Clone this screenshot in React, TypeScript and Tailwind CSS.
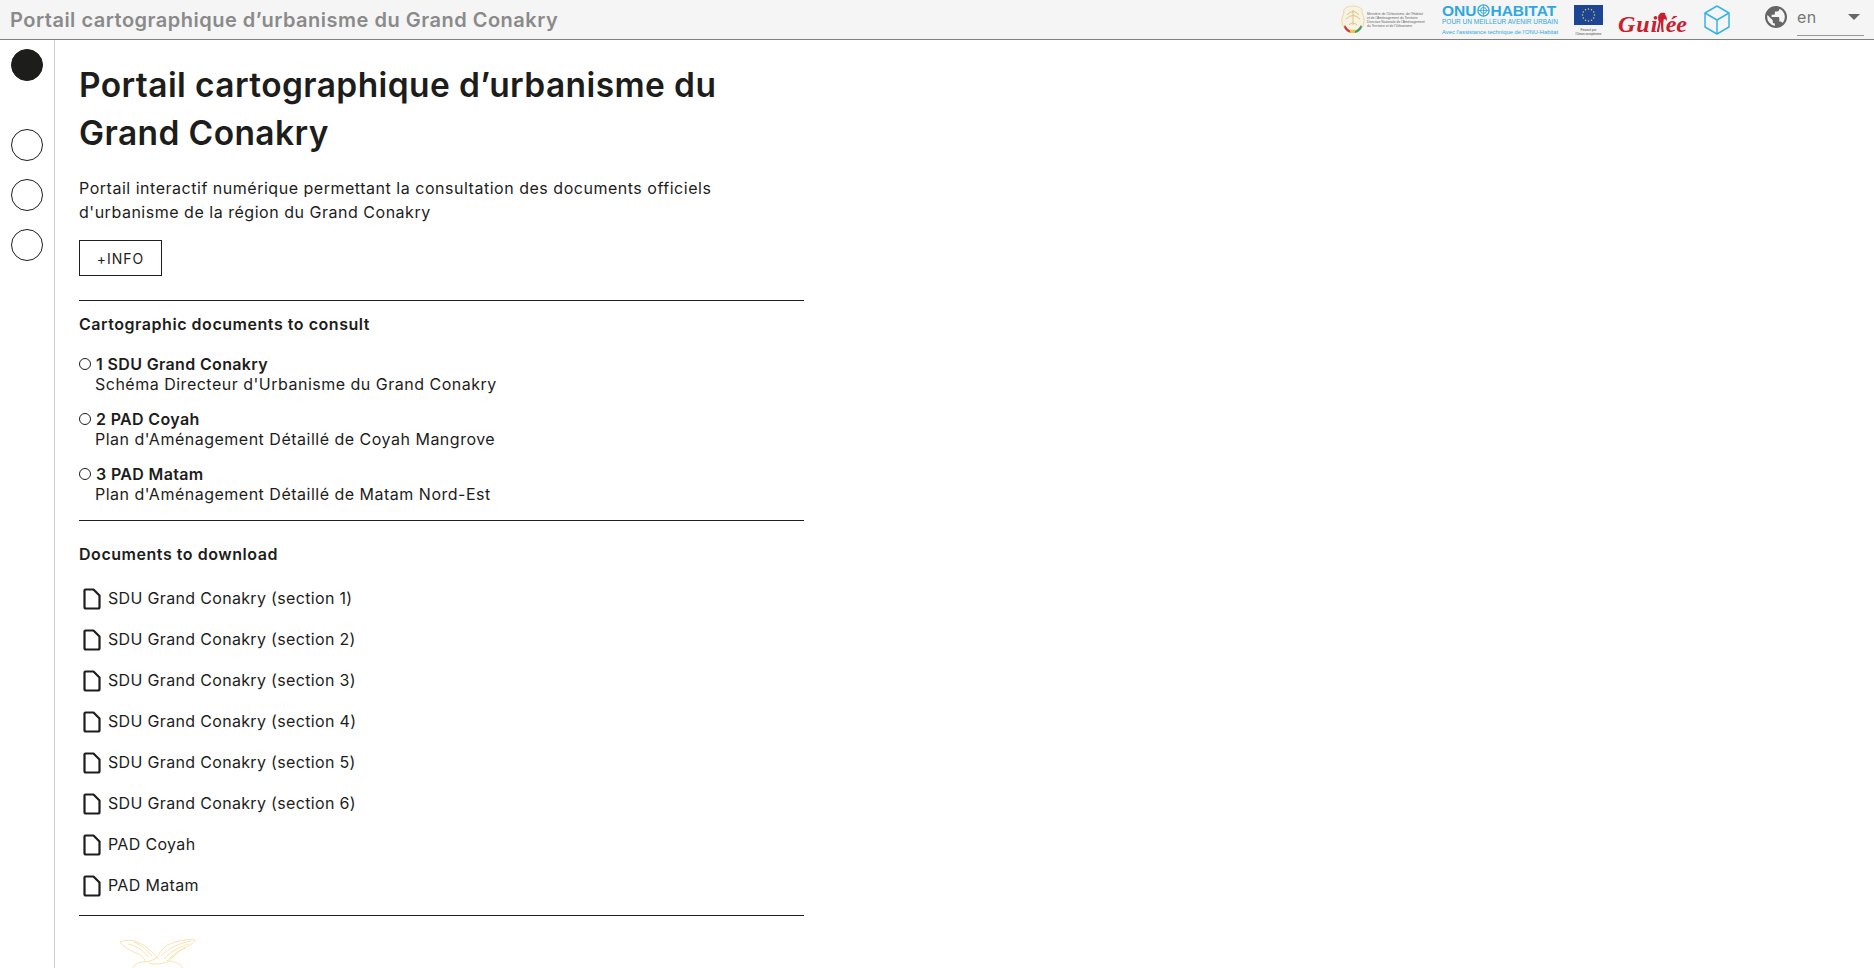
import React from "react";

const F = "font-['Inter','Liberation_Sans',sans-serif]";

function Arms() {
  return (
    <svg width="26" height="29" viewBox="0 0 26 29" fill="none">
      <path d="M4 8 C2 3 9 1 13 1 C17 1 24 3 22 8 C26 14 24 22 20 25 L6 25 C2 22 0 14 4 8Z" fill="#f8f2e2" stroke="#e8d7a6" strokeWidth="1" />
      <path d="M13 5 L13 20 M7 10 Q13 3 19 10 M6 14 Q13 7 20 14 M9 20 Q13 16 17 20" stroke="#dcc582" strokeWidth="1" />
      <path d="M5 20 Q8 25 11 26 L11 28 Q6 27 4 22Z" fill="#c9363c" />
      <rect x="10" y="25" width="6" height="3" fill="#e8c93c" />
      <path d="M21 20 Q18 25 15 26 L15 28 Q20 27 22 22Z" fill="#3f9a5c" />
    </svg>
  );
}

function EU() {
  const stars = Array.from({ length: 12 }, (_, i) => {
    const a = (i / 12) * Math.PI * 2;
    return <circle key={i} cx={14.5 + Math.cos(a) * 6} cy={10 + Math.sin(a) * 6} r="0.75" fill="#f0d040" />;
  });
  return (
    <svg width="29" height="20" viewBox="0 0 29 20" className="block">
      <rect width="29" height="20" fill="#1c4596" />
      {stars}
    </svg>
  );
}

function UnEmblem() {
  return (
    <svg width="13" height="13" viewBox="0 0 13 13" fill="none" stroke="#2fa8e0" className="block mx-[0.5px]">
      <circle cx="6.5" cy="6.5" r="5.6" strokeWidth="1.3" />
      <circle cx="6.5" cy="6.5" r="3" strokeWidth="1" />
      <path d="M6.5 1 V12 M1 6.5 H12" strokeWidth="0.8" />
    </svg>
  );
}

function Cube() {
  return (
    <svg width="26" height="30" viewBox="0 0 26 30" fill="none" stroke="#38b3e6" strokeWidth="1.5" strokeLinejoin="round" className="block">
      <path d="M13 1 L25 8 V22 L13 29 L1 22 V8 Z" />
      <path d="M1 8 L13 15 L25 8 M13 15 V29" />
    </svg>
  );
}

function Globe() {
  return (
    <svg width="22" height="22" viewBox="2 2 20 20" fill="#666" className="block">
      <path d="M12 2a10 10 0 1 0 0 20 10 10 0 0 0 0-20Zm-1 17.9A8 8 0 0 1 4.2 10.2L9 15v1a2 2 0 0 0 2 2v1.9Zm6.9-2.5A2 2 0 0 0 16 16h-1v-3a1 1 0 0 0-1-1H8v-2h2a1 1 0 0 0 1-1V7h2a2 2 0 0 0 2-2v-.4a8 8 0 0 1 2.9 12.8Z" />
    </svg>
  );
}

function GuineeFigure() {
  return (
    <svg width="17" height="30" viewBox="0 0 16 28" fill="#c8202f" className="block mx-[-2px] mb-[-2px]">
      <path d="M3 8 C3 3 7 0 10 1 C13 0 14 3 13 4 C15 6 16 8 15 13 C14 10 12 9 11 10 C10 15 10 22 11 28 L8 28 C7 22 7 17 7 13 C6 18 5 23 4 28 L1 28 C2 22 4 16 4 13 C3 12 3 10 3 8Z" />
    </svg>
  );
}

function DocIcon() {
  return (
    <svg width="18" height="22" viewBox="0 0 18 22" fill="none" stroke="#1d1d1b" strokeWidth="2.2" strokeLinejoin="round" className="block shrink-0">
      <path d="M2.5 1.5 H10.5 L16.5 7.5 V19 A1.5 1.5 0 0 1 15 20.5 H3 A1.5 1.5 0 0 1 1.5 19 V2.5 A1 1 0 0 1 2.5 1.5 Z" />
    </svg>
  );
}

function Eagle() {
  return (
    <svg width="78" height="32" viewBox="0 0 78 32" fill="none" stroke="#fbe3ae" strokeWidth="1" className="block">
      <path d="M1 4 C8 1 16 2 24 7 C30 11 35 15 38 20 C42 10 50 5 60 3 C66 2 72 1 76 2 C74 6 68 9 62 12 C58 15 54 19 50 23 C56 24 62 25 64 31 M38 20 C34 22 30 24 25 24 C20 24 18 25 15 28 C14 30 14 31 14 32" />
      <path d="M1 4 C4 9 12 13 20 16 C24 18 26 21 26 24" />
      <path d="M9 6 C16 7 24 12 29 19 M15 4 C22 7 28 12 33 18 M42 18 C48 11 58 6 72 3 M45 21 C51 14 60 9 70 6 M48 23 C53 18 60 13 66 9" />
      <path d="M30 25 C36 27 44 26 50 23" />
    </svg>
  );
}

function Dot({ filled, className = "" }: { filled?: boolean; className?: string }) {
  return (
    <div className={`w-[32px] h-[32px] rounded-full border border-[#1d1d1b] ${filled ? "bg-[#1d1d1b]" : "bg-white"} ${className}`} />
  );
}

const maps = [
  ["1 SDU Grand Conakry", "Schéma Directeur d'Urbanisme du Grand Conakry"],
  ["2 PAD Coyah", "Plan d'Aménagement Détaillé de Coyah Mangrove"],
  ["3 PAD Matam", "Plan d'Aménagement Détaillé de Matam Nord-Est"],
];

const docs = [
  "SDU Grand Conakry (section 1)",
  "SDU Grand Conakry (section 2)",
  "SDU Grand Conakry (section 3)",
  "SDU Grand Conakry (section 4)",
  "SDU Grand Conakry (section 5)",
  "SDU Grand Conakry (section 6)",
  "PAD Coyah",
  "PAD Matam",
];

export default function App() {
  return (
    <div className={`h-screen overflow-hidden bg-white flex flex-col text-[#1d1d1b] ${F}`}>
      <header className="h-[40px] shrink-0 bg-[#f5f5f5] border-b border-[#808080] flex items-center pl-[10px]">
        <div className="text-[20px] leading-[38px] font-semibold text-[#8a8a8a] tracking-[0.5px]">
          Portail cartographique d’urbanisme du Grand Conakry
        </div>
        <div className="ml-auto flex items-center">
          <Arms />
          <div className="ml-[1px] w-[59px] text-[3.4px] leading-[4px] text-[#666] font-['Liberation_Sans',sans-serif]">
            Ministère de l'Urbanisme, de l'Habitat et de l'Aménagement du Territoire
            Direction Nationale de l'Aménagement du Territoire et de l'Urbanisme
          </div>
          <div className="ml-[16px] w-[116px] flex flex-col text-[#2fa8e0] font-['Liberation_Sans',sans-serif] whitespace-nowrap">
            <div className="h-[14px] flex items-center text-[15.5px] leading-[14px] font-bold">
              <span>ONU</span>
              <UnEmblem />
              <span>HABITAT</span>
            </div>
            <div className="text-[6.5px] leading-[8px]">POUR UN MEILLEUR AVENIR URBAIN</div>
            <div className="text-[5.8px] leading-[8px] mt-[2px]">Avec l'assistance technique de l'ONU-Habitat</div>
          </div>
          <div className="ml-[16px] w-[29px] flex flex-col items-center font-['Liberation_Sans',sans-serif] text-[3px] leading-[4px] text-[#444] text-center whitespace-nowrap mt-[1px]">
            <EU />
            <div className="mt-[3px]">Financé par</div>
            <div>l'Union européenne</div>
          </div>
          <div className="ml-[15px] w-[69px] h-[31px] flex items-end text-[#c8202f] text-[24px] leading-[22px] font-bold italic font-['Liberation_Serif',serif]">
            <span className="tracking-[1px]">Gui</span>
            <GuineeFigure />
            <span>ée</span>
          </div>
          <div className="ml-[17px]"><Cube /></div>
          <div className="ml-[35px] mt-[-5px]"><Globe /></div>
          <div className="ml-[10px] mr-[10px] w-[67px] h-[32px] self-start border-b border-[#999] flex items-center justify-between text-[16px] text-[#777] tracking-[0.5px]">
            <span className="mb-[4px]">en</span>
            <span className="w-0 h-0 mr-[4px] mb-[4px] border-x-[6px] border-x-transparent border-t-[6px] border-t-[#666]" />
          </div>
        </div>
      </header>
      <div className="flex-1 flex min-h-0">
        <aside className="w-[55px] shrink-0 border-r border-[#cccccc] pt-[9px] pl-[11px] flex flex-col">
          <Dot filled />
          <Dot className="mt-[48px]" />
          <Dot className="mt-[18px]" />
          <Dot className="mt-[18px]" />
        </aside>
        <main className="w-[725px] ml-[24px] pt-[21px]">
          <h1 className="text-[33.5px] leading-[48px] font-semibold w-[680px] tracking-[0.4px]">
            Portail cartographique d’urbanisme du Grand Conakry
          </h1>
          <p className="mt-[19px] text-[16px] leading-[24px] w-[680px] tracking-[0.52px]">
            Portail interactif numérique permettant la consultation des documents officiels d'urbanisme de la région du Grand Conakry
          </p>
          <button className="mt-[16px] block w-[83px] h-[36px] border border-[#1d1d1b] text-[14px] tracking-[1px] text-center">+INFO</button>
          <div className="mt-[24px] border-t border-[#1d1d1b] pt-[12px]">
            <h2 className="text-[16px] leading-[22px] font-semibold tracking-[0.54px]">Cartographic documents to consult</h2>
            <ul className="mt-[19px] flex flex-col gap-[15px]">
              {maps.map(([a, b]) => (
                <li key={a} className="leading-[20px] text-[16px]">
                  <div className="flex items-center font-semibold tracking-[0.35px]">
                    <span className="w-[12px] h-[12px] rounded-full border border-[#1d1d1b] mr-[5px]" />
                    {a}
                  </div>
                  <div className="pl-[16px] tracking-[0.5px]">{b}</div>
                </li>
              ))}
            </ul>
          </div>
          <div className="mt-[16px] border-t border-[#1d1d1b] pt-[22px]">
            <h2 className="text-[16px] leading-[22px] font-semibold tracking-[0.54px]">Documents to download</h2>
            <ul className="mt-[12px] flex flex-col">
              {docs.map((d) => (
                <li key={d} className="h-[41px] flex items-center text-[16px] tracking-[0.33px]">
                  <div className="ml-[4px] mr-[7px] mt-[3px]"><DocIcon /></div>
                  {d}
                </li>
              ))}
            </ul>
          </div>
          <div className="mt-[10px] border-t border-[#1d1d1b] pt-[22px] pl-[40px]">
            <Eagle />
          </div>
        </main>
      </div>
    </div>
  );
}
